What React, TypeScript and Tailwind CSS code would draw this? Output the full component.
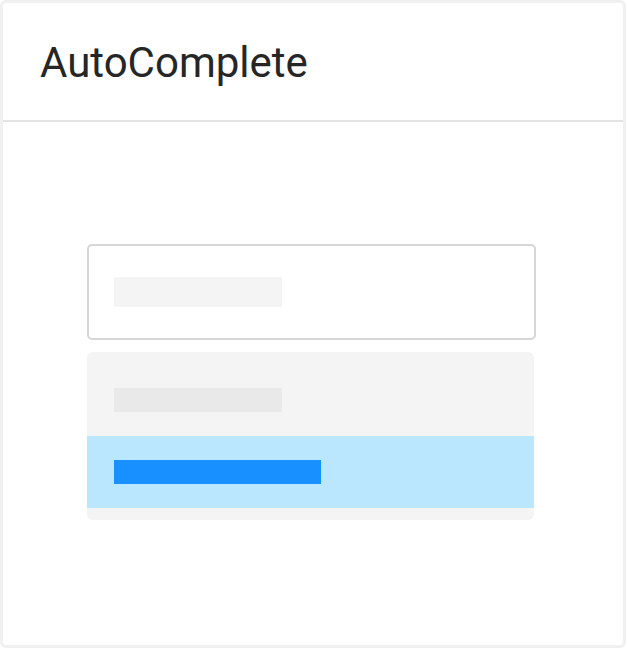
export default function App() {
  return (
    <div className="w-[627px] h-[649px] bg-white">
      <div className="w-[626px] h-[648px] border-[3px] border-[#f0f0f0] rounded-[6px] flex flex-col overflow-hidden">
        <div className="h-[119px] border-b-2 border-[#e3e3e3] flex items-center pl-[37px] pt-[2px]">
          <span
            className="text-[42px] text-[#262626] leading-none"
            style={{ fontFamily: 'Roboto, "Liberation Sans", sans-serif' }}
          >
            AutoComplete
          </span>
        </div>
        <div className="flex-1 flex flex-col pl-[84px] pt-[122px]">
          <div className="w-[449px] h-[96px] border-2 border-[#d6d6d6] rounded-[5px] flex items-start pl-[25px] pt-[31px]">
            <div className="w-[168px] h-[30px] bg-[#f4f4f4]" />
          </div>
          <div className="mt-[12px] w-[447px] h-[168px] bg-[#f4f4f4] rounded-[6px] flex flex-col overflow-hidden">
            <div className="h-[84px] pl-[27px] pt-[36px]">
              <div className="w-[168px] h-[24px] bg-[#e9e9e9]" />
            </div>
            <div className="h-[72px] bg-[#bae6fe] pl-[27px] pt-[24px]">
              <div className="w-[207px] h-[24px] bg-[#1890ff]" />
            </div>
          </div>
        </div>
      </div>
    </div>
  );
}
